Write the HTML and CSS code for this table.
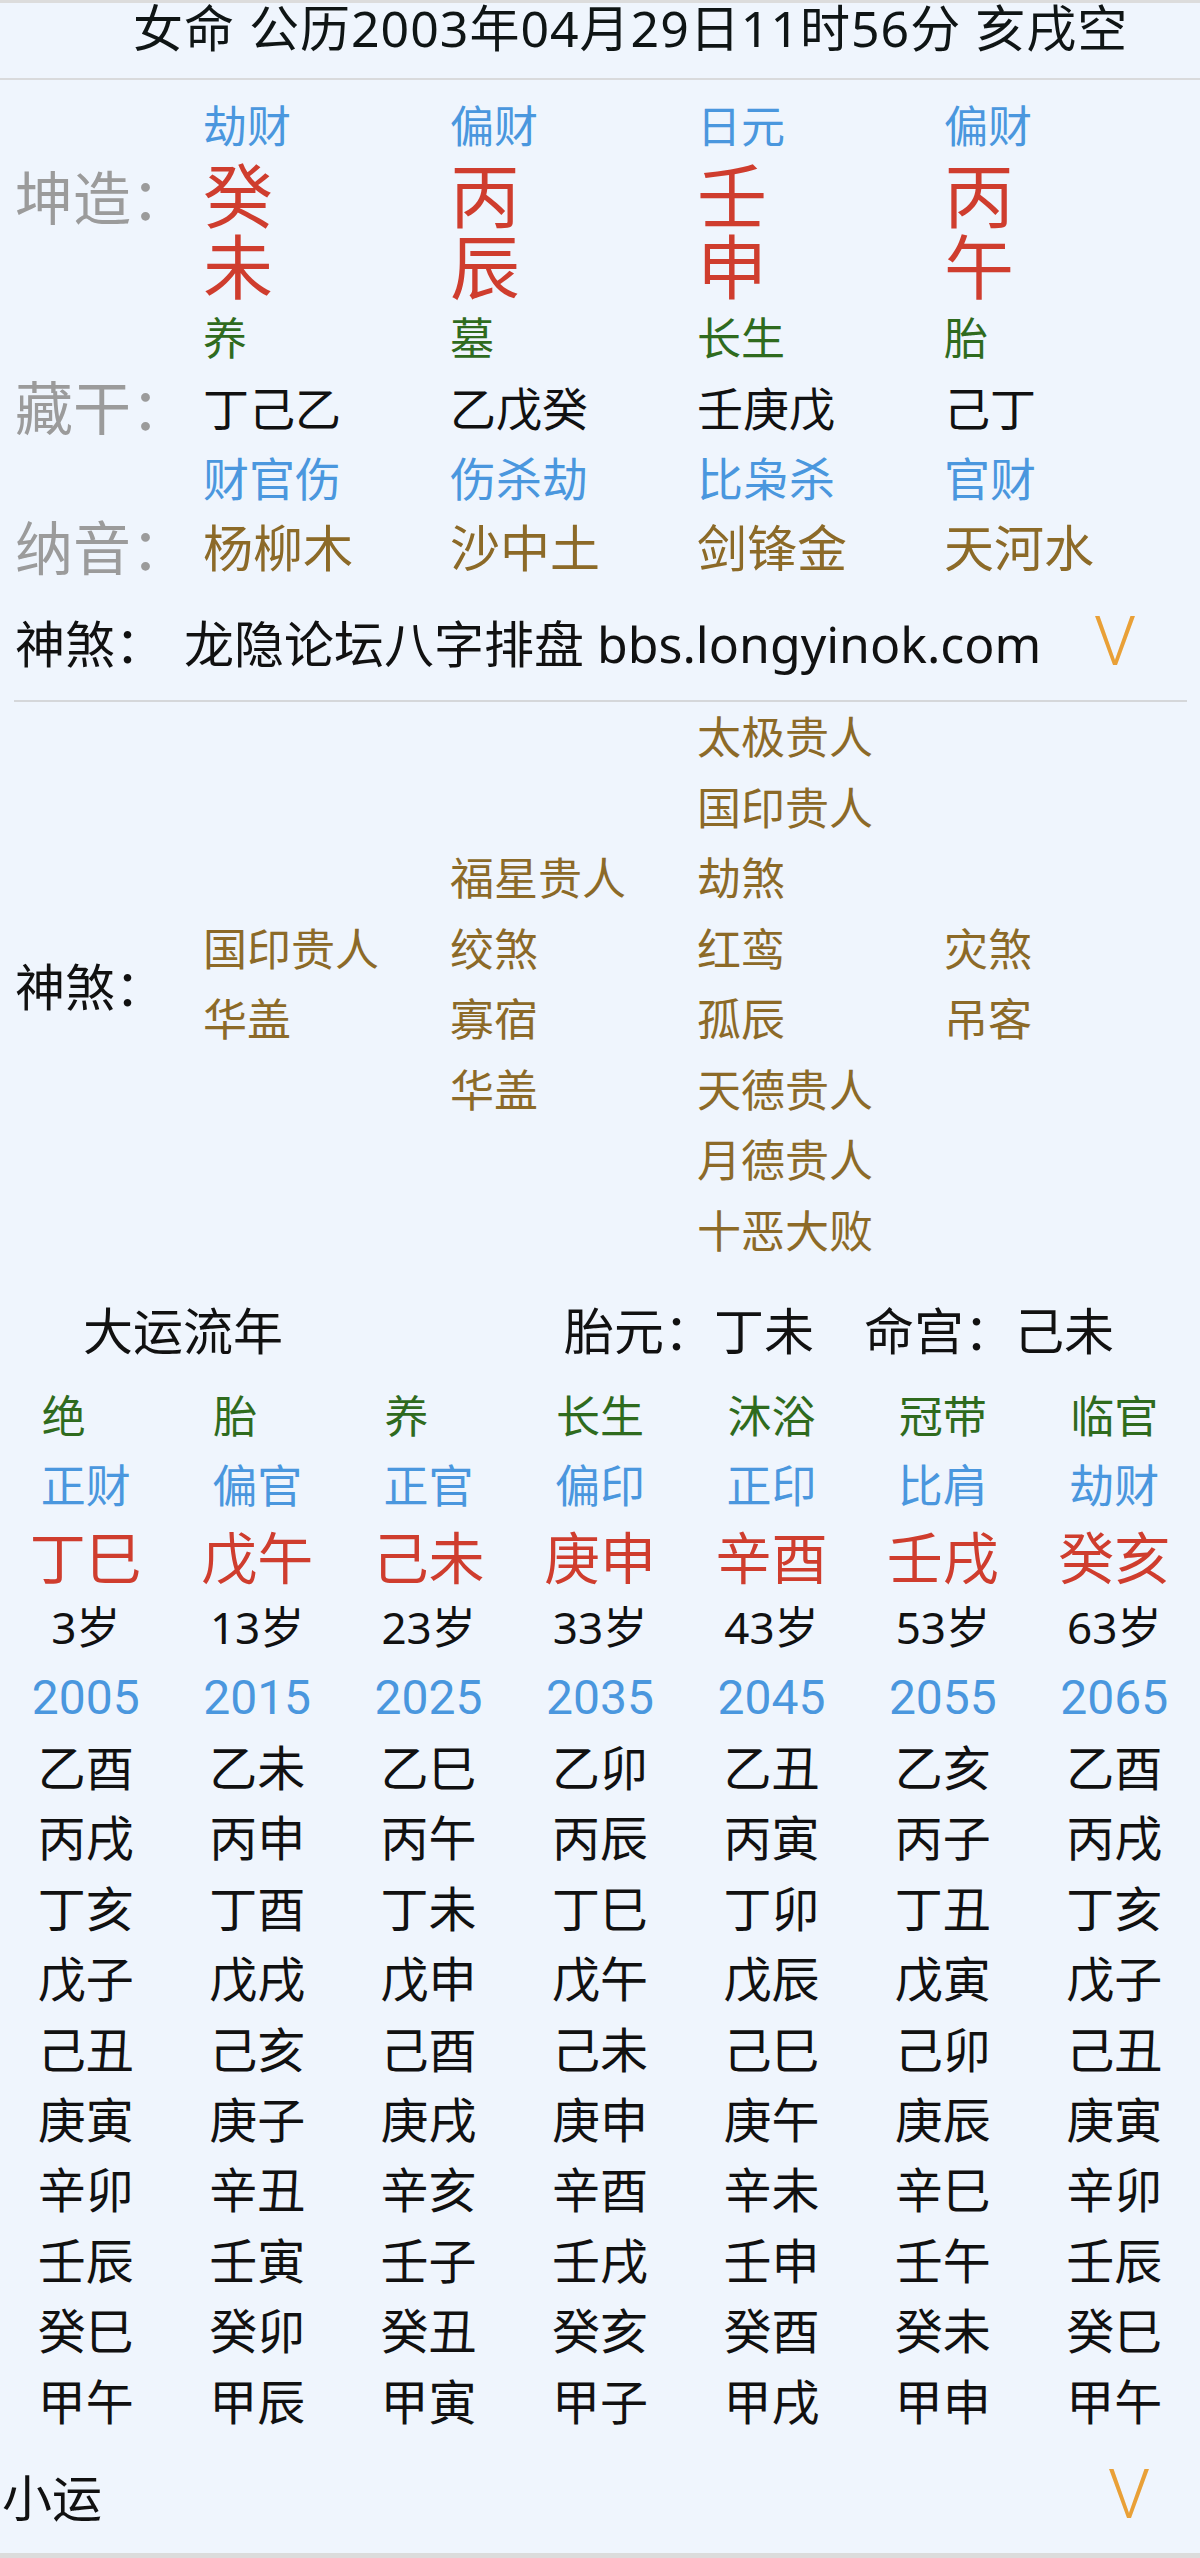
FILE: index.html
```html
<!DOCTYPE html>
<html lang="zh-CN">
<head>
<meta charset="utf-8">
<title>八字排盘</title>
<link rel="stylesheet" href="styles.css">
</head>
<body>
<div class="page">
  <header class="title">女命 公历2003年04月29日11时56分 亥戌空</header>

  <section class="pillars">
    <div class="lab"></div>
    <div class="god">劫财</div>
    <div class="god">偏财</div>
    <div class="god">日元</div>
    <div class="god">偏财</div>

    <div class="lab lab-stem">坤造：</div>
    <div class="stem">癸<br>未</div>
    <div class="stem">丙<br>辰</div>
    <div class="stem">壬<br>申</div>
    <div class="stem">丙<br>午</div>

    <div class="lab"></div>
    <div class="zs">养</div>
    <div class="zs">墓</div>
    <div class="zs">长生</div>
    <div class="zs">胎</div>

    <div class="lab">藏干：</div>
    <div class="cg">丁己乙</div>
    <div class="cg">乙戊癸</div>
    <div class="cg">壬庚戊</div>
    <div class="cg">己丁</div>

    <div class="lab"></div>
    <div class="cgs">财官伤</div>
    <div class="cgs">伤杀劫</div>
    <div class="cgs">比枭杀</div>
    <div class="cgs">官财</div>

    <div class="lab">纳音：</div>
    <div class="ny">杨柳木</div>
    <div class="ny">沙中土</div>
    <div class="ny">剑锋金</div>
    <div class="ny">天河水</div>
  </section>

  <div class="ss-row">
    <span class="ss-label">神煞：</span>
    <span class="ss-text">龙隐论坛八字排盘 bbs.longyinok.com</span>
    <span class="vmark">V</span>
  </div>
  <div class="divider"></div>

  <section class="shensha">
    <div class="ss-label2">神煞：</div>
    <ul class="ss-col">
      <li>国印贵人</li>
      <li>华盖</li>
    </ul>
    <ul class="ss-col">
      <li>福星贵人</li>
      <li>绞煞</li>
      <li>寡宿</li>
      <li>华盖</li>
    </ul>
    <ul class="ss-col">
      <li>太极贵人</li>
      <li>国印贵人</li>
      <li>劫煞</li>
      <li>红鸾</li>
      <li>孤辰</li>
      <li>天德贵人</li>
      <li>月德贵人</li>
      <li>十恶大败</li>
    </ul>
    <ul class="ss-col">
      <li>灾煞</li>
      <li>吊客</li>
    </ul>
  </section>

  <div class="dy-head">
    <span class="dy-title">大运流年</span>
    <span class="dy-info">胎元：丁未　命宫：己未</span>
  </div>

  <section class="dayun">
    <div class="c zs2"><span class="one">绝</span></div>
    <div class="c zs2"><span class="one">胎</span></div>
    <div class="c zs2"><span class="one">养</span></div>
    <div class="c zs2">长生</div>
    <div class="c zs2">沐浴</div>
    <div class="c zs2">冠带</div>
    <div class="c zs2">临官</div>

    <div class="c sg">正财</div>
    <div class="c sg">偏官</div>
    <div class="c sg">正官</div>
    <div class="c sg">偏印</div>
    <div class="c sg">正印</div>
    <div class="c sg">比肩</div>
    <div class="c sg">劫财</div>

    <div class="c gz">丁巳</div>
    <div class="c gz">戊午</div>
    <div class="c gz">己未</div>
    <div class="c gz">庚申</div>
    <div class="c gz">辛酉</div>
    <div class="c gz">壬戌</div>
    <div class="c gz">癸亥</div>

    <div class="c age">3岁</div>
    <div class="c age">13岁</div>
    <div class="c age">23岁</div>
    <div class="c age">33岁</div>
    <div class="c age">43岁</div>
    <div class="c age">53岁</div>
    <div class="c age">63岁</div>

    <div class="c yr">2005</div>
    <div class="c yr">2015</div>
    <div class="c yr">2025</div>
    <div class="c yr">2035</div>
    <div class="c yr">2045</div>
    <div class="c yr">2055</div>
    <div class="c yr">2065</div>

    <div class="c ln">乙酉</div><div class="c ln">乙未</div><div class="c ln">乙巳</div><div class="c ln">乙卯</div><div class="c ln">乙丑</div><div class="c ln">乙亥</div><div class="c ln">乙酉</div>
    <div class="c ln">丙戌</div><div class="c ln">丙申</div><div class="c ln">丙午</div><div class="c ln">丙辰</div><div class="c ln">丙寅</div><div class="c ln">丙子</div><div class="c ln">丙戌</div>
    <div class="c ln">丁亥</div><div class="c ln">丁酉</div><div class="c ln">丁未</div><div class="c ln">丁巳</div><div class="c ln">丁卯</div><div class="c ln">丁丑</div><div class="c ln">丁亥</div>
    <div class="c ln">戊子</div><div class="c ln">戊戌</div><div class="c ln">戊申</div><div class="c ln">戊午</div><div class="c ln">戊辰</div><div class="c ln">戊寅</div><div class="c ln">戊子</div>
    <div class="c ln">己丑</div><div class="c ln">己亥</div><div class="c ln">己酉</div><div class="c ln">己未</div><div class="c ln">己巳</div><div class="c ln">己卯</div><div class="c ln">己丑</div>
    <div class="c ln">庚寅</div><div class="c ln">庚子</div><div class="c ln">庚戌</div><div class="c ln">庚申</div><div class="c ln">庚午</div><div class="c ln">庚辰</div><div class="c ln">庚寅</div>
    <div class="c ln">辛卯</div><div class="c ln">辛丑</div><div class="c ln">辛亥</div><div class="c ln">辛酉</div><div class="c ln">辛未</div><div class="c ln">辛巳</div><div class="c ln">辛卯</div>
    <div class="c ln">壬辰</div><div class="c ln">壬寅</div><div class="c ln">壬子</div><div class="c ln">壬戌</div><div class="c ln">壬申</div><div class="c ln">壬午</div><div class="c ln">壬辰</div>
    <div class="c ln">癸巳</div><div class="c ln">癸卯</div><div class="c ln">癸丑</div><div class="c ln">癸亥</div><div class="c ln">癸酉</div><div class="c ln">癸未</div><div class="c ln">癸巳</div>
    <div class="c ln">甲午</div><div class="c ln">甲辰</div><div class="c ln">甲寅</div><div class="c ln">甲子</div><div class="c ln">甲戌</div><div class="c ln">甲申</div><div class="c ln">甲午</div>
  </section>

  <div class="xy-row">
    <span class="xy-label">小运</span>
    <span class="vmark vmark2">V</span>
  </div>
</div>
</body>
</html>
```

FILE: styles.css
```css
* {
  box-sizing: border-box;
  margin: 0;
  padding: 0;
}

html, body {
  background: #eff5fd;
}

body {
  font-family: "Noto Sans", "Noto Sans CJK SC", sans-serif;
  color: #111;
}

.page {
  width: 1200px;
  height: 2558px;
  overflow: hidden;
}

/* header */
.title {
  height: 80px;
  border-top: 3px solid #dcdcdc;
  border-bottom: 2px solid #d9dadc;
  padding-left: 133px;
  font-size: 50px;
  line-height: 50px;
  letter-spacing: 1px;
  color: #0f1515;
  white-space: nowrap;
}

/* four pillars */
.pillars {
  margin-top: 11px;
  display: grid;
  grid-template-columns: 203px repeat(4, 247px);
}

.lab {
  padding-left: 15px;
  font-size: 58px;
  line-height: 70px;
  color: #9b9b9b;
  white-space: nowrap;
}

.lab-stem {
  line-height: 71px;
  padding-top: 1px;
}

.god {
  font-size: 44px;
  line-height: 70px;
  color: #4a97de;
}

.stem {
  font-size: 70px;
  line-height: 71px;
  color: #cf3d2e;
}

.zs {
  font-size: 44px;
  line-height: 70px;
  color: #2f6b1e;
}

.cg {
  font-size: 46px;
  line-height: 70px;
  color: #111;
}

.cgs {
  font-size: 46px;
  line-height: 70px;
  color: #4a97de;
}

.ny {
  font-size: 50px;
  line-height: 70px;
  color: #8c6a28;
}

/* shensha summary row */
.ss-row {
  height: 117px;
  display: flex;
  align-items: center;
  padding-left: 15px;
  font-size: 50px;
  white-space: nowrap;
}

.ss-label {
  width: 169px;
  flex: none;
}

.ss-text {
  flex: 1;
}

.vmark {
  font-family: Roboto, sans-serif;
  font-weight: 300;
  font-size: 68px;
  color: #e9a037;
  margin-right: 64px;
}

.divider {
  height: 2px;
  background: #d5d7da;
  margin: 0 13px 0 14px;
}

/* shensha detail */
.shensha {
  height: 564px;
  display: flex;
  align-items: center;
}

.ss-label2 {
  width: 203px;
  flex: none;
  padding-left: 15px;
  font-size: 50px;
  color: #111;
}

.ss-col {
  list-style: none;
  width: 247px;
  flex: none;
  font-size: 44px;
  line-height: 70.5px;
  color: #8c6a28;
}

/* dayun */
.dy-head {
  height: 115px;
  padding-top: 10px;
  padding-left: 83px;
  display: flex;
  align-items: center;
  font-size: 50px;
  white-space: nowrap;
}

.dy-title {
  width: 481px;
  flex: none;
}

.dayun {
  display: grid;
  grid-template-columns: repeat(7, 1fr);
  text-align: center;
}

.c {
  line-height: 70.4px;
  white-space: nowrap;
}

.one {
  display: inline-block;
  width: 2em;
  text-align: left;
}

.zs2 {
  font-size: 44px;
  color: #2f6b1e;
}

.sg {
  font-size: 45px;
  color: #4a97de;
}

.gz {
  font-size: 56px;
  color: #cf3d2e;
}

.age {
  font-size: 44px;
  color: #111;
}

.yr {
  font-family: Roboto, "Noto Sans CJK SC", sans-serif;
  font-size: 48px;
  color: #4a97de;
}

.ln {
  font-size: 48px;
  color: #111;
}

/* xiaoyun */
.xy-row {
  height: 121px;
  border-bottom: 5px solid #dcdcdc;
  display: flex;
  align-items: center;
  justify-content: space-between;
  padding-left: 2px;
  font-size: 50px;
}

.vmark2 {
  margin-right: 50px;
}
```
